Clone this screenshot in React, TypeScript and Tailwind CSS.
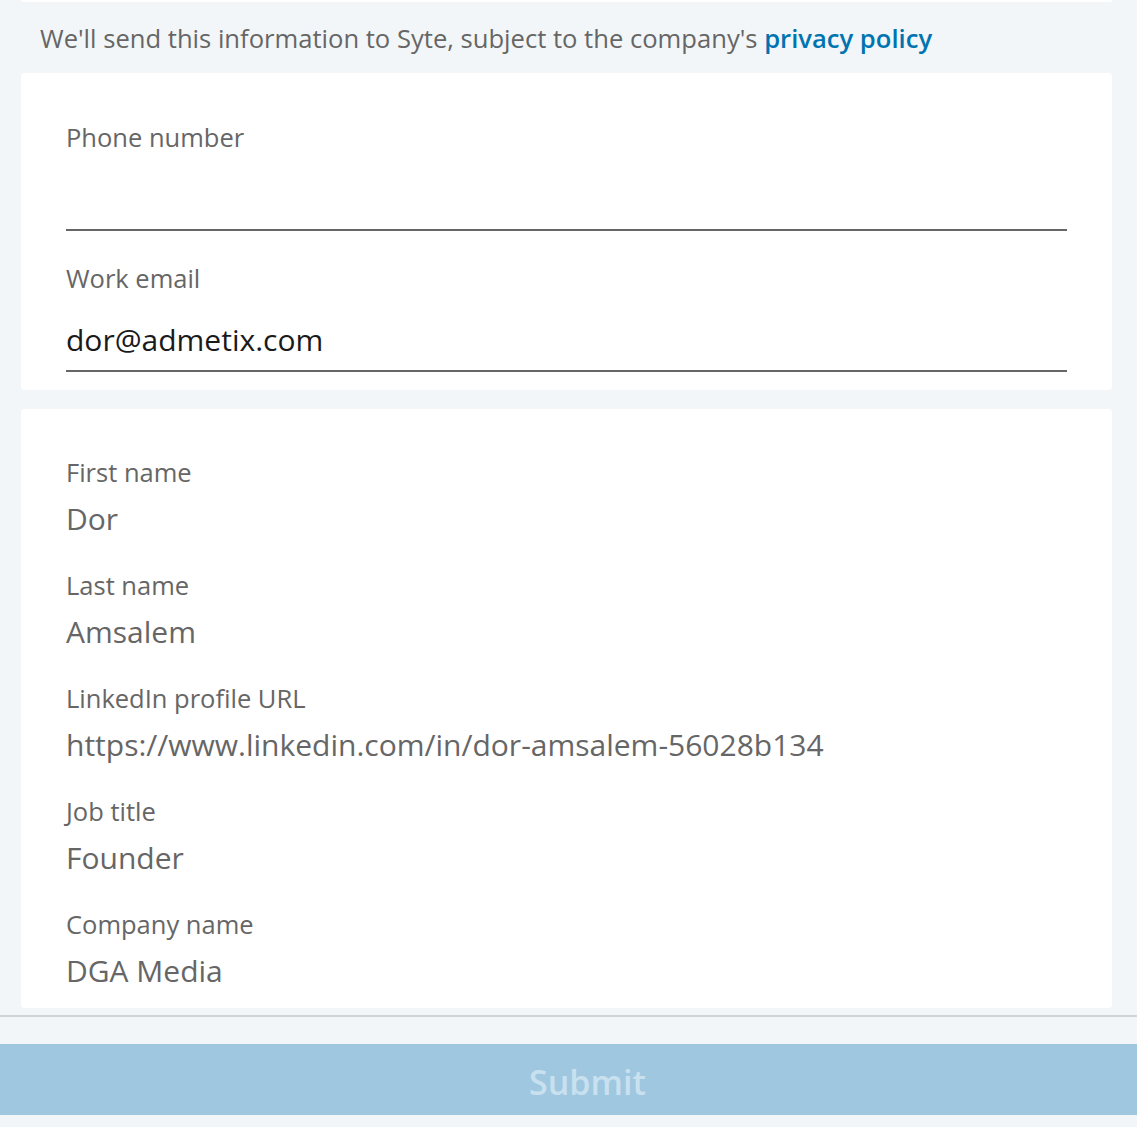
import React from 'react';

const fields = [
  { label: 'First name', value: 'Dor' },
  { label: 'Last name', value: 'Amsalem' },
  { label: 'LinkedIn profile URL', value: 'https://www.linkedin.com/in/dor-amsalem-56028b134' },
  { label: 'Job title', value: 'Founder' },
  { label: 'Company name', value: 'DGA Media' },
];

export default function App() {
  return (
    <div
      className="min-h-[1127px] w-full bg-[#f3f6f8] overflow-hidden"
      style={{ fontFamily: '"Open Sans", "Noto Sans", sans-serif' }}
    >
      <div className="ml-[21px] mr-[25px] h-[2px] bg-white rounded-b" />

      <p className="px-[40px] pt-[21px] pb-[18px] text-[25.6px] leading-[32px] text-[#666666] whitespace-nowrap">
        We'll send this information to Syte, subject to the company's{' '}
        <a href="#" className="font-semibold text-[#0073b1]">privacy policy</a>
      </p>

      <div className="ml-[21px] mr-[25px] bg-white rounded px-[45px] pt-[49px] pb-[18px]">
        <label className="block">
          <span className="block text-[25.5px] leading-[30px] text-[#666666]">Phone number</span>
          <input
            type="tel"
            className="mt-[8px] w-full h-[71px] pt-[7px] border-b-2 border-[#666666] bg-transparent text-[30px] text-[#1a1a1a] outline-none"
          />
        </label>
        <label className="block mt-[32px]">
          <span className="block text-[25.5px] leading-[30px] text-[#666666]">Work email</span>
          <input
            type="email"
            defaultValue="dor@admetix.com"
            className="mt-[8px] w-full h-[71px] pt-[7px] border-b-2 border-[#666666] bg-transparent text-[30px] text-[#1a1a1a] outline-none"
          />
        </label>
      </div>

      <div className="mt-[19px] ml-[21px] mr-[25px] bg-white rounded px-[45px] pt-[48px] pb-[18px] flex flex-col gap-[32px]">
        {fields.map((f) => (
          <div key={f.label}>
            <div className="text-[25.5px] leading-[30px] text-[#666666]">{f.label}</div>
            <div className="mt-[13px] text-[30px] leading-[38px] text-[#666666]">{f.value}</div>
          </div>
        ))}
      </div>

      <div className="mt-[7px] h-[2px] bg-[#d0d4d7]" />

      <div className="pt-[27px]">
        <button
          type="button"
          disabled
          className="w-full h-[71px] pl-[38px] pt-[5px] bg-[#a0c7e0] text-[34px] font-semibold text-[#c9e1ef]"
        >
          Submit
        </button>
      </div>
    </div>
  );
}
